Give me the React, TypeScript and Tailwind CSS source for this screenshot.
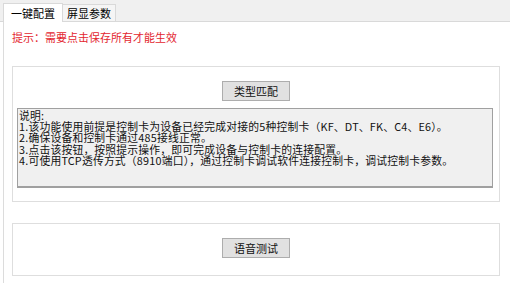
import React from 'react';

const font = { fontFamily: '"Noto Sans CJK SC", "Noto Sans", sans-serif' };

function Btn({ label }: { label: string }) {
    return (
        <button className="w-[68px] h-[20px] bg-[#e1e1e1] border border-[#adadad] text-[11px] leading-none text-[#111] flex items-center justify-center">
            {label}
        </button>
    );
}

export default function App() {
    const notes = [
        '说明:',
        '1.该功能使用前提是控制卡为设备已经完成对接的5种控制卡（KF、DT、FK、C4、E6）。',
        '2.确保设备和控制卡通过485接线正常。',
        '3.点击该按钮，按照提示操作，即可完成设备与控制卡的连接配置。',
        '4.可使用TCP透传方式（8910端口），通过控制卡调试软件连接控制卡，调试控制卡参数。',
    ];

    return (
        <div className="w-[510px] h-[283px] bg-white overflow-hidden flex flex-col" style={font}>
            {/* Tabs */}
            <div className="h-[22px] shrink-0 bg-[#f0f0f0] border-b border-[#d9d9d9] flex items-end pl-[3px]">
                <div className="w-[60px] h-[19px] bg-white border border-b-0 border-[#d9d9d9] text-[11px] leading-[18px] text-center text-black -mb-px">
                    一键配置
                </div>
                <div className="w-[53px] h-[17px] bg-[#f5f5f5] border border-l-0 border-b-0 border-[#d9d9d9] text-[11px] leading-[17px] text-center text-black">
                    屏显参数
                </div>
            </div>

            {/* Page */}
            <div className="flex-1 ml-[3px] border-l border-[#dcdcdc] pl-[8px] pr-[10px]">
                <div className="mt-[9px] text-[11px] leading-[12px] text-[#e3262f]">
                    提示：需要点击保存所有才能生效
                </div>

                <div className="mt-[23px] w-[488px] h-[136px] border border-[#dedede] flex flex-col items-center pt-[14px]">
                    <Btn label="类型匹配" />
                    <div className="mt-[7px] self-start ml-[4px] w-[476px] h-[80px] bg-[#f0f0f0] border border-[#a0a0a0] border-b-[2px] px-[1px] pt-[1px] text-[10.8px] leading-[11.2px] tracking-[0.2px] text-[#111] whitespace-nowrap">
                        {notes.map((n) => (
                            <div key={n}>{n}</div>
                        ))}
                    </div>
                </div>

                <div className="mt-[21px] w-[488px] h-[53px] border border-[#dedede] flex justify-center pt-[14px]">
                    <Btn label="语音测试" />
                </div>
            </div>
        </div>
    );
}
